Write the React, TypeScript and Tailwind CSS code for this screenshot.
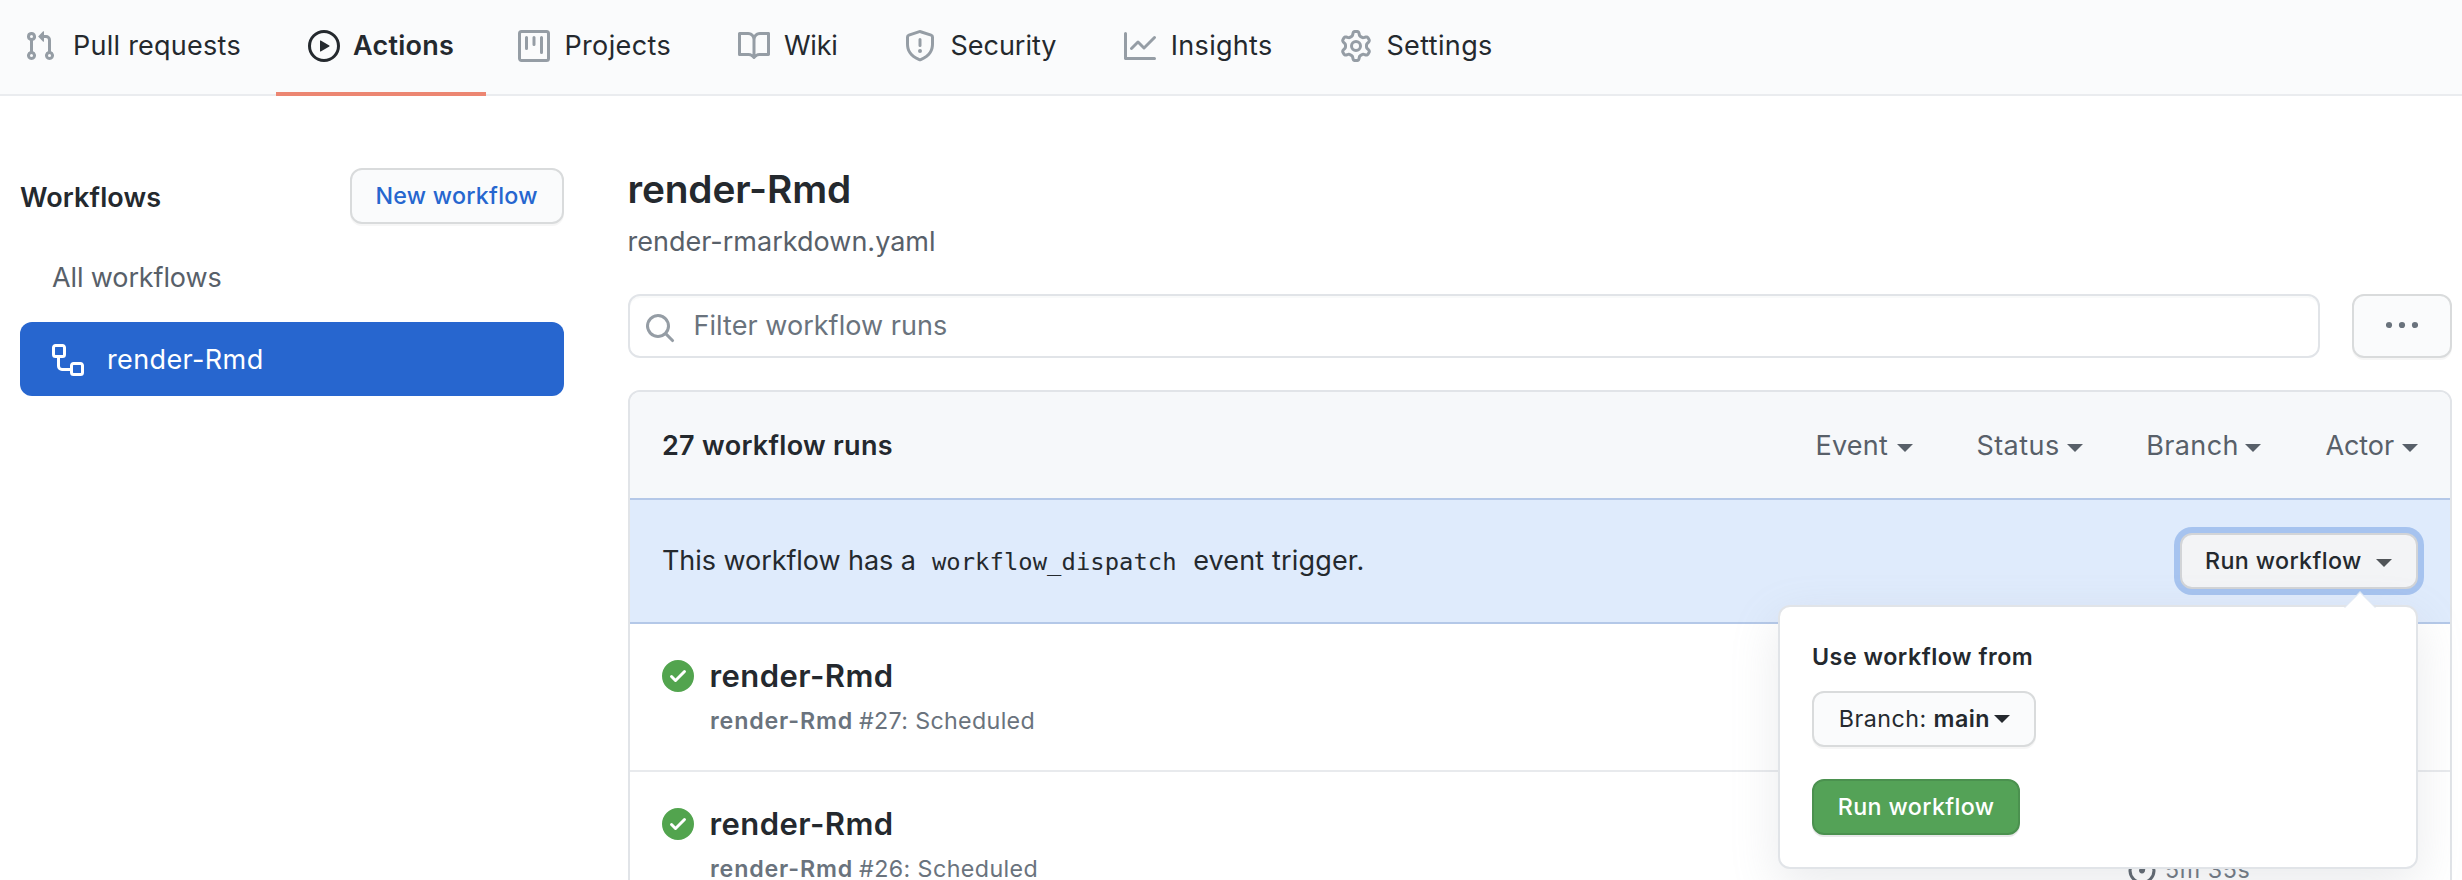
import React from "react";

const PATHS = {
  pullRequest:
    "M7.177 3.073L9.573.677A.25.25 0 0110 .854v4.792a.25.25 0 01-.427.177L7.177 3.427a.25.25 0 010-.354zM3.75 2.5a.75.75 0 100 1.5.75.75 0 000-1.5zm-2.25.75a2.25 2.25 0 113 2.122v5.256a2.251 2.251 0 11-1.5 0V5.372A2.25 2.25 0 011.5 3.25zM11 2.5h-1V4h1a1 1 0 011 1v5.628a2.251 2.251 0 101.5 0V5A2.5 2.5 0 0011 2.5zm1 10.25a.75.75 0 111.5 0 .75.75 0 01-1.5 0zM3.75 12a.75.75 0 100 1.5.75.75 0 000-1.5z",
  play: "M1.5 8a6.5 6.5 0 1113 0 6.5 6.5 0 01-13 0zM8 0a8 8 0 100 16A8 8 0 008 0zM6.379 5.227A.25.25 0 006 5.442v5.117a.25.25 0 00.379.214l4.264-2.559a.25.25 0 000-.428L6.379 5.227z",
  project:
    "M1.75 0A1.75 1.75 0 000 1.75v12.5C0 15.216.784 16 1.75 16h12.5A1.75 1.75 0 0016 14.25V1.75A1.75 1.75 0 0014.25 0H1.75zM1.5 1.75a.25.25 0 01.25-.25h12.5a.25.25 0 01.25.25v12.5a.25.25 0 01-.25.25H1.75a.25.25 0 01-.25-.25V1.75zM11.75 3a.75.75 0 00-.75.75v7.5a.75.75 0 001.5 0v-7.5a.75.75 0 00-.75-.75zm-8.25.75a.75.75 0 011.5 0v5.5a.75.75 0 01-1.5 0v-5.5zM8 3a.75.75 0 00-.75.75v3.5a.75.75 0 001.5 0v-3.5A.75.75 0 008 3z",
  book: "M0 1.75A.75.75 0 01.75 1h4.253c1.227 0 2.317.59 3 1.501A3.744 3.744 0 0111.006 1h4.245a.75.75 0 01.75.75v10.5a.75.75 0 01-.75.75h-4.507a2.25 2.25 0 00-1.591.659l-.622.621a.75.75 0 01-1.06 0l-.622-.621A2.25 2.25 0 005.258 13H.75a.75.75 0 01-.75-.75V1.75zm8.755 3a2.25 2.25 0 012.25-2.25H14.5v9h-3.757c-.71 0-1.4.201-1.992.572l.004-7.322zm-1.504 7.324l.004-5.073-.002-2.253A2.25 2.25 0 005.003 2.5H1.5v9h3.757a3.75 3.75 0 011.994.574z",
  shield:
    "M7.467.133a1.75 1.75 0 011.066 0l5.25 1.68A1.75 1.75 0 0115 3.48V7c0 1.566-.32 3.182-1.303 4.682-.983 1.498-2.585 2.813-5.032 3.855a1.7 1.7 0 01-1.33 0c-2.447-1.042-4.049-2.357-5.032-3.855C1.32 10.182 1 8.566 1 7V3.48a1.75 1.75 0 011.217-1.667l5.25-1.68zm.61 1.429a.25.25 0 00-.153 0l-5.25 1.68a.25.25 0 00-.174.238V7c0 1.358.275 2.666 1.057 3.86.784 1.194 2.121 2.34 4.366 3.297a.2.2 0 00.154 0c2.245-.956 3.582-2.104 4.366-3.298C13.225 9.666 13.5 8.36 13.5 7V3.48a.25.25 0 00-.174-.237l-5.25-1.68zM9 10.5a1 1 0 11-2 0 1 1 0 012 0zm-.25-5.75a.75.75 0 10-1.5 0v3a.75.75 0 001.5 0v-3z",
  graph:
    "M1.5 1.75a.75.75 0 00-1.5 0v12.5c0 .414.336.75.75.75h14.5a.75.75 0 000-1.5H1.5V1.75zm14.28 2.53a.75.75 0 00-1.06-1.06L10 7.94 7.53 5.47a.75.75 0 00-1.06 0L3.22 8.72a.75.75 0 001.06 1.06L7 7.06l2.47 2.47a.75.75 0 001.06 0l5.25-5.25z",
  gear: "M7.429 1.525a6.593 6.593 0 011.142 0c.036.003.108.036.137.146l.289 1.105c.147.56.55.967.997 1.189.174.086.341.183.501.29.417.278.97.423 1.53.27l1.102-.303c.11-.03.175.016.195.046.219.31.41.641.573.989.014.031.022.11-.059.19l-.815.806c-.411.406-.562.957-.53 1.456a4.588 4.588 0 010 .582c-.032.499.119 1.05.53 1.456l.815.806c.08.08.073.159.059.19a6.494 6.494 0 01-.573.99c-.02.029-.086.074-.195.045l-1.103-.303c-.559-.153-1.112-.008-1.529.27-.16.107-.327.204-.5.29-.449.222-.851.628-.998 1.189l-.289 1.105c-.029.11-.101.143-.137.146a6.613 6.613 0 01-1.142 0c-.036-.003-.108-.037-.137-.146l-.289-1.105c-.147-.56-.55-.967-.997-1.189a4.502 4.502 0 01-.501-.29c-.417-.278-.97-.423-1.53-.27l-1.102.303c-.11.03-.175-.016-.195-.046a6.492 6.492 0 01-.573-.989c-.014-.031-.022-.11.059-.19l.815-.806c.411-.406.562-.957.53-1.456a4.587 4.587 0 010-.582c.032-.499-.119-1.05-.53-1.456l-.815-.806c-.08-.08-.073-.159-.059-.19a6.44 6.44 0 01.573-.99c.02-.029.086-.075.195-.045l1.103.303c.559.153 1.112.008 1.529-.27.16-.107.327-.204.5-.29.449-.222.851-.628.998-1.189l.289-1.105c.029-.11.101-.143.137-.146zM8 0c-.236 0-.47.01-.701.03-.743.065-1.29.615-1.458 1.261l-.29 1.106c-.017.066-.078.158-.211.224a5.994 5.994 0 00-.668.386c-.123.082-.233.09-.3.071L3.27 2.776c-.644-.177-1.392.02-1.82.63a7.977 7.977 0 00-.704 1.217c-.315.675-.111 1.422.363 1.891l.815.806c.05.048.098.147.088.294a6.084 6.084 0 000 .772c.01.147-.038.246-.088.294l-.815.806c-.474.469-.678 1.216-.363 1.891.2.428.436.835.704 1.218.428.609 1.176.806 1.82.63l1.103-.303c.066-.019.176-.011.299.071.213.143.436.272.668.386.133.066.194.158.212.224l.289 1.106c.169.646.715 1.196 1.458 1.26a8.094 8.094 0 001.402 0c.743-.064 1.29-.614 1.458-1.26l.29-1.106c.017-.066.078-.158.211-.224a5.98 5.98 0 00.668-.386c.123-.082.233-.09.3-.071l1.102.302c.644.177 1.392-.02 1.82-.63.268-.382.505-.789.704-1.217.315-.675.111-1.422-.364-1.891l-.814-.806c-.05-.048-.098-.147-.088-.294a6.1 6.1 0 000-.772c-.01-.147.039-.246.088-.294l.814-.806c.475-.469.679-1.216.364-1.891a7.992 7.992 0 00-.704-1.218c-.428-.609-1.176-.806-1.82-.63l-1.103.303c-.066.019-.176.011-.299-.071a5.991 5.991 0 00-.668-.386c-.133-.066-.194-.158-.212-.224L10.16 1.29C9.99.645 9.444.095 8.701.031A8.094 8.094 0 008 0zm1.5 8a1.5 1.5 0 11-3 0 1.5 1.5 0 013 0zM11 8a3 3 0 11-6 0 3 3 0 016 0z",
  workflow:
    "M0 1.75C0 .784.784 0 1.75 0h3.5C6.216 0 7 .784 7 1.75v3.5A1.75 1.75 0 015.25 7H4v4a1 1 0 001 1h4v-1.25C9 9.784 9.784 9 10.75 9h3.5c.966 0 1.75.784 1.75 1.75v3.5A1.75 1.75 0 0114.25 16h-3.5A1.75 1.75 0 019 14.25v-.75H5A2.5 2.5 0 012.5 11V7h-.75A1.75 1.75 0 010 5.25v-3.5zm1.75-.25a.25.25 0 00-.25.25v3.5c0 .138.112.25.25.25h3.5a.25.25 0 00.25-.25v-3.5a.25.25 0 00-.25-.25h-3.5zm9 9a.25.25 0 00-.25.25v3.5c0 .138.112.25.25.25h3.5a.25.25 0 00.25-.25v-3.5a.25.25 0 00-.25-.25h-3.5z",
  search:
    "M11.5 7a4.499 4.499 0 11-8.998 0A4.499 4.499 0 0111.5 7zm-.82 4.74a6 6 0 111.06-1.06l3.04 3.04a.75.75 0 11-1.06 1.06l-3.04-3.04z",
  check:
    "M8 16A8 8 0 108 0a8 8 0 000 16zm3.78-9.72a.75.75 0 00-1.06-1.06L6.75 9.19 5.28 7.72a.75.75 0 00-1.06 1.06l2 2a.75.75 0 001.06 0l4.5-4.5z",
  stopwatch:
    "M5.75.75A.75.75 0 016.5 0h3a.75.75 0 010 1.5h-.75v1l-.001.041a6.718 6.718 0 013.464 1.435l.007-.006.75-.75a.75.75 0 111.06 1.06l-.75.75-.006.007a6.75 6.75 0 11-10.548 0L2.72 5.03l-.75-.75a.75.75 0 011.06-1.06l.75.75.007.006A6.718 6.718 0 017.25 2.541a.756.756 0 010-.041v-1H6.5a.75.75 0 01-.75-.75zM8 14.5A5.25 5.25 0 108 4a5.25 5.25 0 000 10.5zm.389-6.7l1.33-1.33a.75.75 0 111.061 1.06L9.45 8.861A1.502 1.502 0 018 10.75a1.5 1.5 0 11.389-2.95z",
};

function Icon({ name, className = "" }: { name: keyof typeof PATHS; className?: string }) {
  return (
    <svg viewBox="0 0 16 16" fill="currentColor" fillRule="evenodd" className={`h-8 w-8 shrink-0 ${className}`}>
      <path d={PATHS[name]} />
    </svg>
  );
}

function Caret({ className = "" }: { className?: string }) {
  return (
    <svg viewBox="0 0 16 8" fill="currentColor" className={`h-2 w-4 shrink-0 ${className}`}>
      <path d="M0 0h16L8 8z" />
    </svg>
  );
}

const NAV: { icon: keyof typeof PATHS; label: string; box: string; text: string; active?: boolean }[] = [
  { icon: "pullRequest", label: "Pull requests", box: "w-[276px] pl-6 gap-[17px]", text: "tracking-[0.25px]" },
  { icon: "play", label: "Actions", box: "w-[210px] pl-8 gap-[13px]", text: "tracking-[0.23px] font-semibold", active: true },
  { icon: "project", label: "Projects", box: "w-[220px] pl-8 gap-[14.4px]", text: "tracking-[0.37px]" },
  { icon: "book", label: "Wiki", box: "w-[166px] pl-8 gap-[14px]", text: "tracking-[-0.25px]" },
  { icon: "shield", label: "Security", box: "w-[220px] pl-8 gap-[14.5px]", text: "tracking-[-0.02px]" },
  { icon: "graph", label: "Insights", box: "w-[216px] pl-8 gap-[14.8px]", text: "tracking-[0.3px]" },
  { icon: "gear", label: "Settings", box: "pl-8 gap-[14.4px]", text: "tracking-[0.37px]" },
];

function TopNav() {
  return (
    <nav className="flex h-24 shrink-0 bg-[#fafbfc] shadow-[inset_0_-2px_0_#eaecef]">
      {NAV.map((n) => (
        <a
          key={n.label}
          className={`flex h-24 shrink-0 items-center border-b-4 ${n.box} ${n.active ? "border-[#ec8672]" : "border-transparent"}`}
        >
          <Icon name={n.icon} className={n.active ? "text-[#24292e]" : "text-[#959da5]"} />
          <span className={n.text}>{n.label}</span>
        </a>
      ))}
    </nav>
  );
}

function Sidebar() {
  return (
    <aside className="w-[544px] shrink-0 pt-[72px]">
      <div className="flex h-14 items-center justify-between">
        <h3 className="pt-1 font-semibold tracking-[0.1px]">Workflows</h3>
        <button className="flex h-14 w-[214px] items-center rounded-xl border-2 border-[#d9dbdc] bg-[#fafbfc] pl-[23.5px] text-[23.25px] font-medium tracking-[0.25px] text-[#2666cf] shadow-[0_2px_0_rgba(27,31,35,0.04)]">
          New workflow
        </button>
      </div>
      <div className="mt-[17px] flex h-[74px] items-center pl-8 tracking-[-0.12px] text-[#586069]">All workflows</div>
      <div className="mt-[7px] flex h-[74px] items-center gap-[23px] rounded-xl bg-[#2766cf] pt-0.5 pl-8 text-white">
        <Icon name="workflow" />
        <span className="tracking-[0.38px]">render-Rmd</span>
      </div>
    </aside>
  );
}

const FILTERS = [
  { label: "Event", box: "w-[161px] gap-[8.3px]", text: "tracking-[0.28px]" },
  { label: "Status", box: "w-[169.8px] gap-[7px]", text: "tracking-[0.47px]" },
  { label: "Branch", box: "w-[179.2px] gap-[6.5px]", text: "tracking-[0.39px]" },
  { label: "Actor", box: "gap-[8px]", text: "tracking-[-0.05px]" },
];

function Popover() {
  return (
    <div className="absolute top-[72px] right-0 z-10 h-[264px] w-[640px] rounded-xl border-2 border-[#e1e4e8] bg-white px-8 text-[23.25px] shadow-[0_16px_48px_rgba(149,157,165,0.2)]">
      <svg viewBox="0 0 32 18" className="absolute -top-4 right-10 h-[18px] w-8">
        <path d="M0 17L16 0L32 17" fill="#e1e9f3" />
        <path d="M0 18L16 2L32 18z" fill="#fff" />
      </svg>
      <div className="mt-[34px] h-8 leading-8 font-semibold tracking-[0.5px]">Use workflow from</div>
      <button className="mt-[18px] flex h-14 w-56 items-center rounded-xl border-2 border-[#d9dbdc] bg-[#fafbfc] pl-[22px] whitespace-pre shadow-[0_2px_0_rgba(27,31,35,0.04)]">
        <span className="w-[93.5px] tracking-[0.5px]">Branch:</span>
        <span className="w-[64.5px] font-semibold tracking-[0.44px]">main</span>
        <Caret />
      </button>
      <button className="mt-8 flex h-14 w-52 items-center rounded-xl border-2 border-[#4b914f] bg-[#54a257] pl-[23.8px] font-medium tracking-[0.37px] text-white shadow-[0_2px_0_rgba(27,31,35,0.1)]">
        Run workflow
      </button>
    </div>
  );
}

function Run({ number, tracking, duration }: { number: number; tracking: string; duration?: string }) {
  return (
    <div className="flex h-[148px] border-b-2 border-[#e8eaed] pt-8 pl-8">
      <Icon name="check" className="mt-1 text-[#52a44e]" />
      <div className="ml-[15.5px] flex w-[1415.5px] flex-col">
        <div className="h-10 text-[31px] leading-10 font-semibold tracking-[0.45px]">render-Rmd</div>
        <div className="mt-[9px] flex h-8 text-[23.25px] leading-8 text-[#6a737d]">
          <span className="w-[149.5px] pl-[0.5px] font-semibold tracking-[0.83px]">render-Rmd</span>
          <span className={tracking}>#{number}: Scheduled</span>
        </div>
      </div>
      {duration && (
        <div className="mt-12 flex h-8 items-center gap-[7px] pl-px text-[23.25px] tracking-[0.57px] text-[#6a737d]">
          <Icon name="stopwatch" className="text-[#586069]" />
          <span className="pt-[3px]">{duration}</span>
        </div>
      )}
    </div>
  );
}

function Main() {
  return (
    <main className="ml-16 w-[1824px] shrink-0 pt-[69px]">
      <h1 className="-ml-[0.5px] h-12 text-[38.8px] leading-[48px] font-semibold tracking-[-0.12px]">render-Rmd</h1>
      <div className="mt-[13px] -ml-[0.5px] h-8 leading-8 tracking-[0.01px] text-[#586069]">render-rmarkdown.yaml</div>
      <div className="mt-9 flex h-16 gap-8">
        <div className="flex h-16 w-[1692px] items-center gap-[17.5px] rounded-xl border-2 border-[#e1e4e8] bg-white pl-3.5 shadow-[inset_0_2px_0_rgba(225,228,232,0.2)]">
          <Icon name="search" className="mt-1 text-[#959da5]" />
          <span className="tracking-[0.04px] text-[#6a737d]">Filter workflow runs</span>
        </div>
        <button className="flex h-16 w-[100px] items-center justify-center rounded-xl border-2 border-[#d9dbdc] bg-[#fafbfc] pb-0.5 text-[#6a737d] shadow-[0_2px_0_rgba(27,31,35,0.04)]">
          <svg viewBox="0 0 32 8" fill="currentColor" className="h-2 w-8">
            <circle cx="3" cy="4" r="3.1" />
            <circle cx="16" cy="4" r="3.1" />
            <circle cx="29" cy="4" r="3.1" />
          </svg>
        </button>
      </div>
      <section className="mt-8 h-[600px] rounded-xl border-2 border-[#e1e4e8]">
        <div className="flex h-[106px] items-center rounded-t-[10px] bg-[#f6f8fa] pt-0.5 pl-8">
          <h2 className="w-[1153.4px] shrink-0 font-semibold tracking-[0.3px]">27 workflow runs</h2>
          <div className="flex text-[#586069]">
            {FILTERS.map((f) => (
              <div key={f.label} className={`flex shrink-0 items-center ${f.box}`}>
                <span className={f.text}>{f.label}</span>
                <Caret className="mt-1" />
              </div>
            ))}
          </div>
        </div>
        <div className="flex h-[126px] items-center justify-between border-y-2 border-[#b4c8e8] bg-[#dfebfc] px-8">
          <p className="flex items-baseline">
            <span className="tracking-[-0.06px]">This workflow has a</span>
            <code className="ml-4 font-['DejaVu_Sans_Mono',monospace] text-[23.8px] tracking-[0.07px]">workflow_dispatch</code>
            <span className="ml-[16.5px] tracking-[0.16px]">event trigger.</span>
          </p>
          <div className="relative">
            <button className="flex h-14 w-[238px] items-center gap-[14.5px] rounded-xl border-2 border-[#d2d4d7] bg-[#f3f4f6] pl-[23px] text-[23.25px] font-medium tracking-[0.37px] shadow-[0_0_0_6px_#a6c3ef]">
              Run workflow
              <Caret className="mt-1 text-[#505458]" />
            </button>
            <Popover />
          </div>
        </div>
        <Run number={27} tracking="tracking-[0.33px]" />
        <Run number={26} tracking="tracking-[0.41px]" duration="5m 35s" />
      </section>
    </main>
  );
}

export default function App() {
  return (
    <div className="flex h-[880px] w-[2462px] flex-col overflow-hidden bg-white font-['Inter',sans-serif] text-[27px] leading-8 whitespace-nowrap text-[#24292e]">
      <TopNav />
      <div className="flex min-h-0 flex-1 pl-5">
        <Sidebar />
        <Main />
      </div>
    </div>
  );
}
